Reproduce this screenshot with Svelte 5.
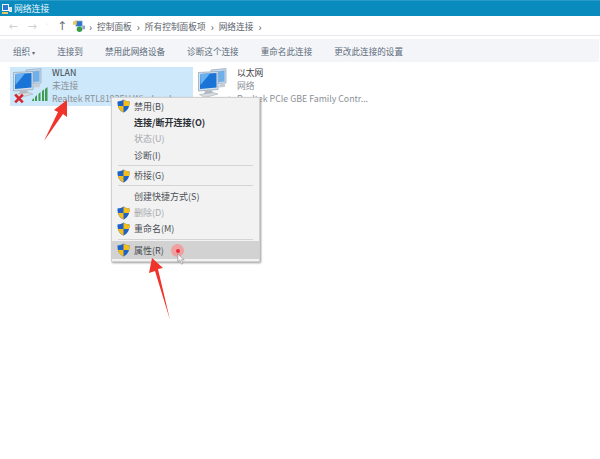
<script>
	const crumbs = ['控制面板', '所有控制面板项', '网络连接'];
	const actions = ['连接到', '禁用此网络设备', '诊断这个连接', '重命名此连接', '更改此连接的设置'];
	const menu = [
		{ label: '禁用(B)', shield: true },
		{ label: '连接/断开连接(O)', bold: true },
		{ label: '状态(U)', disabled: true },
		{ label: '诊断(I)' },
		{ sep: true },
		{ label: '桥接(G)', shield: true },
		{ sep: true },
		{ label: '创建快捷方式(S)' },
		{ label: '删除(D)', shield: true, disabled: true },
		{ label: '重命名(M)', shield: true },
		{ sep: true },
		{ label: '属性(R)', shield: true, active: true }
	];
</script>

{#snippet computers()}
	<svg class="computers" width="30" height="30" viewBox="0 0 30 30">
		<path d="M13 2 L28 0.500 L28 15 L13 16 Z" fill="#c6d6e8" stroke="#9db1c6" stroke-width="0.8" />
		<path d="M15 4 L26.500 2.500 L26.500 13.500 L15 14.500 Z" fill="#6fb0ea" />
		<path d="M22 16 L27 15.500 L27 19 L20 19.500 Z" fill="#c4ccd4" />
		<path d="M0.500 4.500 L20 3.500 L20 21.500 L0.500 23 Z" fill="#d4dfea" stroke="#96a9bc" stroke-width="0.8" />
		<path d="M2 6 L18.500 5 L18.500 19.500 L2 21 Z" fill="#1a74d6" />
		<path d="M2 6 L12 5.500 L2.500 17 Z" fill="#68b0f0" />
		<path d="M7 22.500 L14 22 L15 25.500 L6 26 Z" fill="#b4bbc3" />
		<path d="M1.500 26.500 L15 24.500 L20 26 L7 29.500 Z" fill="#d8dde2" stroke="#a5adb5" stroke-width="0.6" />
	</svg>
{/snippet}

{#snippet shield()}
	<svg width="13" height="14" viewBox="0 0 13 14">
		<path d="M6.5 0.5 C8.5 2 10.5 2.4 12.5 2.4 C12.7 7.5 11 11.3 6.5 13.5 C2 11.3 0.3 7.5 0.5 2.4 C2.5 2.4 4.5 2 6.5 0.5 Z" fill="#1d62c4" />
		<path d="M6.5 0.5 C8.5 2 10.5 2.4 12.5 2.4 C12.6 4 12.5 5.6 12.1 7 L6.5 7 Z" fill="#f6bd16" />
		<path d="M6.5 7 L1 7 C1.7 9.8 3.4 12 6.5 13.5 Z" fill="#f6bd16" />
	</svg>
{/snippet}

<div class="window">
	<header class="titlebar">
		<svg width="12" height="12" viewBox="0 0 12 12">
			<rect x="1" y="1" width="7" height="7" fill="#f4f7fa" />
			<rect x="2" y="2" width="5" height="5" fill="#2c78d0" />
			<rect x="1" y="9" width="6" height="2" fill="#e8c860" />
			<rect x="8" y="4" width="3" height="5" fill="#d7e4ef" />
		</svg>
		<span>网络连接</span>
	</header>

	<nav class="addressbar">
		<span class="nav dim">←</span>
		<span class="nav dim">→</span>
		<span class="caret dim">˅</span>
		<span class="nav up">↑</span>
		<svg class="crumb-icon" width="13" height="13" viewBox="0 0 14 14">
			<rect x="3" y="1" width="7" height="6" fill="#2c78d0" stroke="#c2cbd4" stroke-width="0.7" />
			<path d="M0 2 L4 0 L4 5 L0 5 Z" fill="#e8c860" />
			<circle cx="7" cy="10" r="3" fill="#3a9a4a" />
			<rect x="10" y="6" width="3" height="4" fill="#8aa6c4" />
		</svg>
		<span class="sep">›</span>
		{#each crumbs as crumb}
			<span class="crumb">{crumb}</span>
			<span class="sep">›</span>
		{/each}
	</nav>

	<div class="toolbar">
		<span class="org">组织 <i>▾</i></span>
		{#each actions as action}
			<span>{action}</span>
		{/each}
	</div>

	<main class="content">
		<div class="item selected">
			<div class="icon">
				{@render computers()}
				<svg class="cross" width="12" height="11" viewBox="0 0 13 13">
					<path d="M2 2 L11 11 M11 2 L2 11" stroke="#d8242c" stroke-width="3" />
				</svg>
				<svg class="bars" width="16" height="14" viewBox="0 0 16 14">
					<path d="M0 13 L2 11 V14 H0 Z M3 10 L5 8 V14 H3 Z M6.5 7 L8.5 5 V14 H6.5 Z M10 4 L12 2.500 V14 H10 Z M13 2 L15.500 0 V14 H13 Z" fill="#3f9a52" />
				</svg>
			</div>
			<div class="text">
				<div class="name">WLAN</div>
				<div class="sub">未连接</div>
				<div class="sub">Realtek RTL8192EU Wireless L...</div>
			</div>
		</div>
		<div class="item">
			<div class="icon">
				{@render computers()}
				<svg class="cable" width="20" height="10" viewBox="0 0 20 10">
					<path d="M0 10 L14 4 L20 0 L17 5 L5 10 Z" fill="#7fa6c8" />
				</svg>
			</div>
			<div class="text">
				<div class="name">以太网</div>
				<div class="sub">网络</div>
				<div class="sub">Realtek PCIe GBE Family Contr...</div>
			</div>
		</div>
	</main>

	<div class="menu">
		{#each menu as entry}
			{#if entry.sep}
				<div class="divider"></div>
			{:else}
				<div class="entry" class:bold={entry.bold} class:disabled={entry.disabled} class:active={entry.active}>
					<span class="gutter">
						{#if entry.shield}{@render shield()}{/if}
					</span>
					<span>{entry.label}</span>
				</div>
			{/if}
		{/each}
		<div class="click"><b></b></div>
		<svg class="pointer" width="8" height="12" viewBox="0 0 10 15">
			<path d="M1 1 L1 11 L3.500 9 L5.500 14 L7.500 13 L5.500 8.500 L9 8.500 Z" fill="#f5f5f5" stroke="#8a8a8a" stroke-width="0.8" />
		</svg>
	</div>

	<svg class="arrows" width="600" height="459" viewBox="0 0 600 459">
		<path d="M44 141 L58 112 L54 110 L67 100 L67 117 L63 114 Z" fill="#f0342c" />
		<path d="M170 320 L155 271 L149 273 L152 258 L163 268 L158 269 Z" fill="#f0342c" />
	</svg>
</div>

<style>
	:global(body) {
		margin: 0;
		background: #fff;
	}

	.window {
		position: relative;
		width: 600px;
		height: 459px;
		overflow: hidden;
		background: #fff;
		font-family: "Noto Sans CJK SC", "Noto Sans", sans-serif;
		color: #5f6670;
		font-size: 8.8px;
	}

	.titlebar {
		display: flex;
		align-items: center;
		gap: 1px;
		height: 16px;
		padding-left: 1px;
		background: #0a8bbd;
		border-top: 1px solid #2a9ac6;
		box-sizing: border-box;
		color: #e6f4fa;
		font-size: 8.8px;
	}

	.addressbar {
		display: flex;
		align-items: center;
		height: 18px;
		margin-top: 1px;
		padding-left: 5px;
		border-bottom: 1px solid #e6e8ea;
		color: #5a626c;
		font-size: 8.7px;
		gap: 3px;
	}

	.nav {
		width: 16px;
		text-align: center;
		font-family: "DejaVu Sans", sans-serif;
		font-size: 11px;
	}

	.dim {
		color: #ccd0d4;
	}

	.caret {
		width: 8px;
		text-align: center;
		font-size: 7px;
	}

	.up {
		color: #6a7078;
		font-size: 12px;
	}

	.crumb-icon {
		margin-right: -2px;
	}

	.sep {
		color: #555;
		font-size: 10px;
		margin: 0 2px;
	}

	.toolbar {
		display: flex;
		align-items: center;
		gap: 22px;
		height: 23px;
		margin: 3px 1px 0 0;
		padding-left: 13px;
		background: #f3f5f8;
		color: #5d6b7b;
		font-size: 8.6px;
	}

	.org i {
		font-style: normal;
		font-size: 6px;
	}

	.content {
		display: flex;
		margin: 5px 0 0 10px;
	}

	.item {
		display: flex;
		width: 183px;
		height: 39px;
		gap: 6px;
		padding-left: 3px;
		box-sizing: border-box;
		overflow: hidden;
		line-height: 13px;
	}

	.item + .item {
		margin-left: 2px;
		width: 200px;
	}

	.selected {
		background: #cde8fa;
	}

	.icon {
		position: relative;
		width: 33px;
		flex: none;
		padding-top: 1px;
	}

	.cross {
		position: absolute;
		left: 0;
		bottom: 2px;
	}

	.bars {
		position: absolute;
		left: 19px;
		bottom: 5px;
	}

	.cable {
		position: absolute;
		left: 12px;
		bottom: 0;
	}

	.text {
		white-space: nowrap;
		margin-top: -1px;
	}

	.name {
		color: #3c4148;
	}

	.sub {
		color: #8b9097;
	}

	.menu {
		position: absolute;
		left: 111px;
		top: 97px;
		width: 149px;
		height: 165px;
		box-sizing: border-box;
		background: #f2f2f2;
		border: 1px solid #d0d0d0;
		box-shadow: 1px 1px 2px #9a9a9a;
		color: #4a4f55;
		font-size: 9px;
	}

	.entry {
		display: flex;
		align-items: center;
		height: 16.4px;
		padding-left: 5px;
	}

	.gutter {
		display: flex;
		width: 17px;
		flex: none;
	}

	.bold {
		font-weight: 700;
		color: #2c3036;
	}

	.disabled {
		color: #a6a9ad;
	}

	.active {
		height: 18px;
		background: #d2d2d2;
	}

	.divider {
		height: 1px;
		margin: 1.5px 6px;
		background: #d4d4d4;
	}

	.click {
		position: absolute;
		left: 59px;
		top: 146px;
		width: 13px;
		height: 13px;
		border-radius: 50%;
		background: #f0a0a0;
		display: flex;
		align-items: center;
		justify-content: center;
	}

	.click b {
		width: 4px;
		height: 4px;
		border-radius: 50%;
		background: #e8303a;
	}

	.pointer {
		position: absolute;
		left: 65px;
		top: 155px;
	}

	.arrows {
		position: absolute;
		left: 0;
		top: 0;
		pointer-events: none;
	}
</style>
